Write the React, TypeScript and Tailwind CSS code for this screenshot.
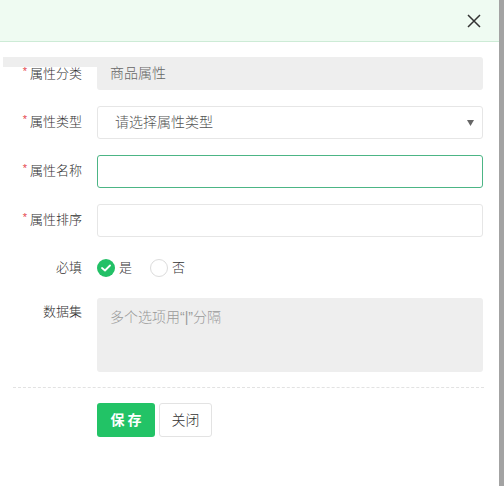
const font = { fontFamily: '"Liberation Sans", "Noto Sans CJK SC", sans-serif' };

function Label({ text, required }: { text: string; required?: boolean }) {
  return (
    <div className="w-[97px] shrink-0 pr-[15px] flex justify-end items-center h-[31px] text-[13px] text-[#333]">
      {required && <span className="text-[#e5484d] text-[11px] mr-[3px] -mt-[4px]">*</span>}
      <span>{text}</span>
    </div>
  );
}

export default function App() {
  return (
    <div className="w-[504px] h-[486px] flex bg-white overflow-hidden font-light" style={font}>
      <div className="flex-1 flex flex-col">
        <div className="h-[42px] shrink-0 bg-[#effbf2] border-b border-[#cdebd6] flex items-center justify-end pr-[18px]">
          <svg width="14" height="14" viewBox="0 0 14 14" className="mt-[1px]">
            <path d="M1 1 L13 13 M13 1 L1 13" stroke="#333" strokeWidth="1.5" fill="none" />
          </svg>
        </div>

        <div className="pt-[15px] pr-[16px]">
          {/* 属性分类 */}
          <div className="flex mb-[16px]">
            <div className="w-[94px] ml-[3px] shrink-0 flex flex-col">
              <div className="h-[10px] bg-[#eeeeee]" />
              <div className="flex justify-end items-center pr-[15px] h-[13px] text-[13px] text-[#333]">
                <span className="text-[#e5484d] text-[11px] mr-[3px] -mt-[4px]">*</span>
                <span>属性分类</span>
              </div>
            </div>
            <div className="flex-1 h-[33px] bg-[#eeeeee] rounded-[3px] rounded-tl-none flex items-center pl-[13px] text-[14px] text-[#666]">
              商品属性
            </div>
          </div>

          {/* 属性类型 */}
          <div className="flex mb-[16px]">
            <Label text="属性类型" required />
            <div className="flex-1 h-[33px] border border-[#e6e6e6] rounded-[3px] flex items-center justify-between pl-[17px] pr-[8px] text-[14px] text-[#555]">
              <span>请选择属性类型</span>
              <svg width="7" height="6" viewBox="0 0 7 6">
                <path d="M0 0 L7 0 L3.5 6 Z" fill="#666" />
              </svg>
            </div>
          </div>

          {/* 属性名称 */}
          <div className="flex mb-[16px]">
            <Label text="属性名称" required />
            <div className="flex-1 h-[33px] border border-[#4cb585] rounded-[3px]" />
          </div>

          {/* 属性排序 */}
          <div className="flex mb-[16px]">
            <Label text="属性排序" required />
            <div className="flex-1 h-[33px] border border-[#e6e6e6] rounded-[3px]" />
          </div>

          {/* 必填 */}
          <div className="flex items-center h-[30px] mb-[15px]">
            <Label text="必填" />
            <div className="flex items-center text-[13px] text-[#333]">
              <span className="w-[18px] h-[18px] rounded-full bg-[#22c066] flex items-center justify-center">
                <svg width="10" height="8" viewBox="0 0 10 8">
                  <path d="M1 4 L4 6.5 L9 1.5" stroke="#fff" strokeWidth="1.8" fill="none" strokeLinecap="round" strokeLinejoin="round" />
                </svg>
              </span>
              <span className="ml-[4px]">是</span>
              <span className="ml-[18px] w-[18px] h-[18px] rounded-full border border-[#dcdcdc] bg-white" />
              <span className="ml-[4px]">否</span>
            </div>
          </div>

          {/* 数据集 */}
          <div className="flex">
            <div className="w-[97px] shrink-0 pr-[15px] flex justify-end pt-[4px] text-[13px] text-[#333]">数据集</div>
            <div className="flex-1 h-[74px] bg-[#eeeeee] rounded-[3px] pl-[13px] pt-[9px] text-[14px] text-[#999]">
              多个选项用“|”分隔
            </div>
          </div>
        </div>

        <div className="mt-[15px] ml-[13px] mr-[15px] border-t border-dashed border-[#e2e2e2]" />

        <div className="flex pl-[97px] mt-[15px]">
          <button className="h-[34px] w-[58px] bg-[#22c366] rounded-[3px] text-white text-[14px] font-bold tracking-[3px] pl-[3px]">
            保存
          </button>
          <button className="h-[34px] w-[53px] ml-[4px] bg-white border border-[#e3e3e3] rounded-[3px] text-[#333] text-[14px]">
            关闭
          </button>
        </div>
      </div>
      <div className="w-[5px] shrink-0 bg-[#a3a3a3]" />
    </div>
  );
}
